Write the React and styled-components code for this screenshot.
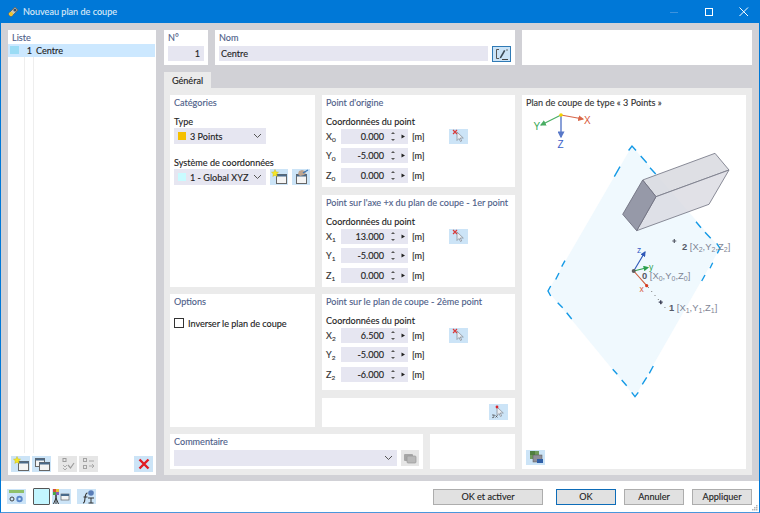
import React from "react";
import styled, { createGlobalStyle } from "styled-components";

const Global = createGlobalStyle`
  html, body { margin: 0; padding: 0; background: #fff; }
  body { font-family: "Lato", "Noto Sans", sans-serif; font-size: 9.1px; color: #222; -webkit-text-stroke: 0.12px currentColor; }
  * { box-sizing: border-box; }
`;

const Win = styled.div`
  width: 760px; height: 513px; display: flex; flex-direction: column;
  border: 1px solid #0078d7; border-top: 0; border-bottom-color: #4a97dc; background: #fff; overflow: hidden;
`;
const TitleBar = styled.div`
  height: 23px; flex: none; background: #0078d7; display: flex; align-items: center;
  padding-left: 6px; color: #dce9f7; font-size: 9.1px; gap: 4px;
`;
const TitleText = styled.span` flex: 1; `;
const WinBtn = styled.div`
  width: 31px; height: 23px; display: flex; align-items: center; justify-content: center; flex: none;
  &:last-child { margin-right: -1px; width: 32px; }
`;
const Main = styled.div`
  height: 458px; flex: none; background: #d1d1d6; display: flex; gap: 8px; padding: 7px 7px 6px;
`;
const Panel = styled.div`
  background: #fff; flex: none;
  width: ${p => p.$w ? p.$w + "px" : "auto"};
  height: ${p => p.$h ? p.$h + "px" : "auto"};
  margin-top: ${p => p.$mt || 0}px;
  padding: ${p => p.$pad || "0 4px"};
`;
const ListPanel = styled(Panel)` display: flex; flex-direction: column; `;
const PanelTitle = styled.div`
  height: 14px; line-height: 16px; color: #4e6089; white-space: nowrap;
`;
const ListHead = styled(PanelTitle)` padding-left: 4px; `;
const ListRow = styled.div`
  height: 13px; line-height: 15px; background: #cce8ff; display: flex; align-items: center; margin-right: 1px; flex: none;
`;
const ListSwatch = styled.span` width: 9px; height: 8px; background: #9bdcf5; margin: -2px 0 0 2px; flex: none; `;
const ListNum = styled.span` width: 13px; text-align: right; flex: none; `;
const ListName = styled.span` margin-left: 4px; `;
const ListBody = styled.div`
  flex: 1; min-height: 0; margin-bottom: 3px;
  background:
    linear-gradient(#eee,#eee) 16px 0/1px 100% no-repeat,
    linear-gradient(#eee,#eee) 25px 0/1px 100% no-repeat;
`;
const Toolbar = styled.div`
  display: flex; height: 19px; padding-left: 3px; gap: 2px; flex: none; align-items: flex-start;
`;
const Spacer = styled.span` width: ${p => p.$w}px; flex: none; `;
const IconBtn = styled.div`
  width: ${p => p.$w || 19}px; height: ${p => p.$h || 16}px; flex: none; display: flex; align-items: center; justify-content: center;
  background: ${p => p.$off ? "#e6e6e6" : "#cce4f7"};
  ${p => p.$active && "outline: 1.5px solid #2f7ab5; outline-offset: -1.5px;"}
`;
const RightCol = styled.div` width: 588px; flex: none; display: flex; flex-direction: column; `;
const HeadRow = styled.div` display: flex; gap: 7px; height: 35px; flex: none; `;
const InlineField = styled.div` display: flex; gap: 4px; align-items: flex-start; margin-top: 2px; `;
const TextBox = styled.div`
  height: 15px; line-height: 15px; background: #e6e6f1; padding: 0 ${p => p.$right ? "4px" : "2px"}; flex: ${p => p.$grow ? 1 : "none"};
  text-align: ${p => p.$right ? "right" : "left"}; width: ${p => p.$w ? p.$w + "px" : "auto"};
`;
const Tab = styled.div`
  margin-top: 7px; width: 47px; height: 16px; background: #ebebeb; line-height: 17px; text-align: center; flex: none;
`;
const TabBody = styled.div` flex: 1; background: #ebebeb; display: flex; gap: 7px; padding: 7px 6px 6px; `;
const LeftBlock = styled.div` width: 345px; display: flex; flex-direction: column; gap: 7px; flex: none; `;
const Columns = styled.div` display: flex; gap: 7px; height: 332px; flex: none; `;
const Col = styled.div` display: flex; flex-direction: column; flex: none; width: ${p => p.$w}px; `;
const FieldLabel = styled.div`
  height: 14px; line-height: 16px; margin-top: ${p => p.$mt || 0}px; white-space: nowrap;
`;
const Select = styled.div`
  height: 16px; width: ${p => p.$w ? p.$w + "px" : "auto"}; background: #e6e6f1; display: flex; align-items: center; padding: 0 4px;
  gap: 4px; flex: ${p => p.$grow ? 1 : "none"};
`;
const Swatch = styled.span` width: 8px; height: 8px; background: ${p => p.$c}; flex: none; `;
const SelectText = styled.span` flex: 1; white-space: nowrap; padding-top: 1px; `;
const SelectRow = styled.div` display: flex; gap: 4px; margin-top: ${p => p.$mt || 0}px; `;
const BtnGroup = styled.div` display: flex; gap: 4px; `;
const CoordRows = styled.div` margin-top: 1px; `;
const CoordRow = styled.div` display: flex; align-items: center; height: 15px; margin-bottom: 4.3px; `;
const AxisLabel = styled.span` width: 15px; flex: none; color: #333; `;
const Sub = styled.sub` font-size: 6.5px; vertical-align: -1.5px; line-height: 0; `;
const CoordBox = styled.div` width: 67px; height: 15px; background: #e6e6f1; display: flex; align-items: center; flex: none; `;
const CoordValue = styled.span` width: 43px; text-align: right; flex: none; `;
const Unit = styled.span` margin-left: 4px; width: 37px; flex: none; `;
const CheckRow = styled.div` display: flex; align-items: center; gap: 4px; margin-top: 9px; height: 12px; letter-spacing: -0.03px; `;
const CheckBox = styled.span` width: 10px; height: 10px; border: 1px solid #333; background: #fff; flex: none; `;
const RightAlign = styled.div` display: flex; justify-content: flex-end; padding: 6px 3px 0 0; `;
const BottomRow = styled.div` display: flex; gap: 7px; height: 35px; flex: none; `;
const DiagramPanel = styled(Panel)` display: flex; flex-direction: column; padding: 0; `;
const DiagramTitle = styled.div` height: 15px; line-height: 16px; padding-left: 4px; color: #333; flex: none; `;
const DiagramSvg = styled.svg` display: block; width: 224px; height: 340px; flex: none; `;
const DiagramFoot = styled.div` padding-left: 4px; flex: none; `;
const Footer = styled.div` flex: 1; display: flex; align-items: flex-start; padding: 7px 7px 0 6px; position: relative; `;
const FooterIcons = styled.div` display: flex; align-items: center; flex: none; width: 426px; `;
const ColorBox = styled.div`
  width: 17px; height: 17px; margin: 0 2px 0 7px; flex: none; background: #c3f6ff; border: 1.5px solid #555; border-radius: 1px;
`;
const FootBtn = styled.div`
  width: ${p => p.$w}px; height: 16px; margin-top: 1px; flex: none; margin-left: ${p => p.$ml || 0}px; text-align: center; line-height: ${p => p.$primary ? "13px" : "14px"};
  background: #e1e1e1; border: ${p => p.$primary ? "1.5px solid #0d6cb8" : "1px solid #adadad"};
`;
const Grip = styled.svg` position: absolute; right: 1px; bottom: 1px; `;

/* ---- small icons ---- */
const Win16 = ({ x = 0, y = 0, w = 10, h = 10 }) => (
  <g>
    <rect x={x + .5} y={y + .5} width={w} height={h} fill="#f4f4f4" stroke="#666" />
    <rect x={x + .5} y={y + .5} width={w} height="2" fill="#4a6a8a" />
  </g>
);
const IconNew = () => (
  <svg width="18" height="16" viewBox="0 0 18 16">
    <Win16 x={6} y={5} w={10} h={9} />
    <path d="M5 0.5l1 2.4 2.5.3-1.8 1.7.5 2.5L5 6.2 2.8 7.4l.5-2.5L1.5 3.2 4 2.9z" fill="#f5e626" stroke="#c8b400" strokeWidth=".4" />
  </svg>
);
const IconCopy = () => (
  <svg width="18" height="16" viewBox="0 0 18 16">
    <Win16 x={2} y={2} w={9} h={8} />
    <Win16 x={6} y={6} w={10} h={8} />
  </svg>
);
const IconEditWin = () => (
  <svg width="18" height="16" viewBox="0 0 18 16">
    <Win16 x={4} y={5} w={10} h={9} />
    <path d="M6 5l1-3 3-1 3 1 1 2-2 2-4 1z" fill="#bda48f" />
    <path d="M11 4l5-3" stroke="#3d78b8" strokeWidth="1.3" />
  </svg>
);
const IconCheck1 = () => (
  <svg width="18" height="16" viewBox="0 0 18 16" fill="none" stroke="#9c9c9c">
    <rect x="4" y="2.5" width="3" height="3" /><path d="M4 9l2 2 2-2M4 12l2 2 2-2" strokeWidth=".8" />
    <path d="M9 9l2.5 3L15 7" strokeWidth="1.2" />
  </svg>
);
const IconCheck2 = () => (
  <svg width="18" height="16" viewBox="0 0 18 16" fill="none" stroke="#a4a4a4">
    <rect x="3.5" y="2.5" width="3" height="3" /><rect x="3.5" y="9.5" width="3" height="3" />
    <path d="M9 5h5M9 10h5l-2-2M14 10l-2 2" strokeWidth=".9" />
  </svg>
);
const IconX = () => (
  <svg width="18" height="16" viewBox="0 0 18 16"><path d="M4.5 3.5l9 9M13.5 3.5l-9 9" stroke="#e01b24" strokeWidth="2.4" /></svg>
);
const IconEdit = () => (
  <svg width="16" height="14" viewBox="0 0 16 14" fill="none">
    <path d="M5 2.5H2.5v9H5" stroke="#555" />
    <path d="M6 10l4-7 1.4 .8-4 7-1.8.7z" fill="#3c4a55" />
    <path d="M8 12.5h6" stroke="#444" /><circle cx="13" cy="3" r=".7" fill="#444" />
  </svg>
);
const IconPick = () => (
  <svg width="19" height="15" viewBox="0 0 19 15">
    <path d="M8 3v8.5l2-2 1.5 3 1.2-.6-1.4-2.9h3z" fill="#e9edf2" stroke="#8a929c" strokeWidth=".8" />
    <path d="M4 1l4 4M8 1L4 5" stroke="#d83a3a" strokeWidth="1.2" />
  </svg>
);
const IconPick3 = () => (
  <svg width="19" height="16" viewBox="0 0 19 16">
    <path d="M8 3v8.5l2-2 1.5 3 1.2-.6-1.4-2.9h3z" fill="#e9edf2" stroke="#8a929c" strokeWidth=".8" />
    <circle cx="8" cy="3" r="1.4" fill="#d8232a" />
    <path d="M3 11h2.5l-1 1.2c1 0 1 1.8-1.4 1.4M6.5 11.5l2 2M8.5 11.5l-2 2" stroke="#444" strokeWidth=".7" fill="none" />
  </svg>
);
const IconComment = () => (
  <svg width="16" height="14" viewBox="0 0 16 14">
    <rect x="2" y="3" width="9" height="7" rx="1" fill="#a6a6a6" />
    <rect x="5" y="5" width="9" height="7" rx="1" fill="#b9b9b9" stroke="#999" strokeWidth=".7" />
  </svg>
);
const IconPic = () => (
  <svg width="18" height="15" viewBox="0 0 18 15">
    <rect x="3" y="1" width="9" height="8" fill="#6f9a5b" />
    <rect x="3" y="1" width="5" height="4" fill="#4f7f3f" />
    <rect x="6" y="5" width="9" height="7" fill="#8f8f9a" stroke="#555" strokeWidth=".5" />
    <rect x="10" y="9" width="6" height="4" fill="#2f5fa8" />
  </svg>
);
const IconUnits = () => (
  <svg width="19" height="15" viewBox="0 0 19 15">
    <rect x="2" y="1" width="15" height="3" fill="#8fc06a" />
    <circle cx="5" cy="10" r="2" fill="none" stroke="#444" strokeWidth="1" />
    <circle cx="12.5" cy="10" r="3.2" fill="#5a86c8" />
    <circle cx="12.5" cy="10" r="1.3" fill="#cce4f7" />
  </svg>
);
const IconTripod = () => (
  <svg width="19" height="16" viewBox="0 0 19 16">
    <rect x="1" y="0" width="3" height="3" fill="#d84a3a" /><rect x="4" y="0" width="3" height="3" fill="#e8c030" />
    <rect x="1" y="3" width="3" height="3" fill="#4aa84a" /><rect x="4" y="3" width="3" height="3" fill="#8a5ab8" />
    <path d="M4 6v3L1.5 15M4 9l2.5 6M4 6v9" stroke="#333" strokeWidth="1" fill="none" />
    <rect x="9" y="5" width="8" height="6" fill="#f4f4f4" stroke="#666" strokeWidth=".7" />
    <rect x="9" y="5" width="8" height="2" fill="#4a6a8a" />
  </svg>
);
const IconFx = () => (
  <svg width="19" height="16" viewBox="0 0 19 16">
    <path d="M6 14c2 0 1.6-2 2-5s.5-5 2.5-5" fill="none" stroke="#333" strokeWidth="1.1" />
    <path d="M6.5 8h4M11 9h6M14 9v5M11.5 14h5" stroke="#333" strokeWidth="1" fill="none" />
    <circle cx="14" cy="4" r="2.8" fill="#5a7db8" />
  </svg>
);
const Chevron = ({ c = "#555" }) => (
  <svg width="9" height="6" viewBox="0 0 9 6"><path d="M1 1l3.5 3.5L8 1" fill="none" stroke={c} strokeWidth="1" /></svg>
);
const Spin = () => (
  <svg width="24" height="15" viewBox="0 0 24 15">
    <path d="M7 5l2-2 2 2zM7 10l2 2 2-2z" fill="#555" />
    <path d="M17.5 5.5l3.5 2-3.5 2z" fill="#222" />
  </svg>
);

const SmallAxis = ({ l, n }) => <AxisLabel>{l}<Sub>{n}</Sub></AxisLabel>;

const CoordPanel = ({ title, h, mt, n, vals }) => (
  <Panel $h={h} $mt={mt}>
    <PanelTitle>{title}</PanelTitle>
    <FieldLabel $mt={5}>Coordonnées du point</FieldLabel>
    <CoordRows>
      {["X", "Y", "Z"].map((a, i) => (
        <CoordRow key={a}>
          <SmallAxis l={a} n={n} />
          <CoordBox><CoordValue>{vals[i]}</CoordValue><Spin /></CoordBox>
          <Unit>[m]</Unit>
          {i === 0 && <IconBtn $h={15}><IconPick /></IconBtn>}
        </CoordRow>
      ))}
    </CoordRows>
  </Panel>
);

const Lbl = ({ x, y, n, i }) => (
  <text x={x} y={y} fontSize="9.4" fill="#7e8494" stroke="none" fontFamily="'Liberation Sans', sans-serif" style={{ WebkitTextStroke: 0 }}>
    <tspan fill="#555a66" fontWeight="700">{n}</tspan>
    {" ["}X<tspan fontSize="7" dy="2">{i}</tspan><tspan dy="-2">,Y</tspan><tspan fontSize="7" dy="2">{i}</tspan><tspan dy="-2">,Z</tspan><tspan fontSize="7" dy="2">{i}</tspan><tspan dy="-2">]</tspan>
  </text>
);

const PLANE_EDGES = [
  "M628.6 150.5L632 146 636 150.5",
  "M614.3 176.7L620 166.7",
  "M565 260.7L561.7 266.7",
  "M559 273L555.7 279.5",
  "M550.7 286L548 291 550.7 296",
  "M557.7 302.7L562.7 307.7",
  "M566.7 312.7L571.7 319",
  "M612.7 369.3L617.3 374.3",
  "M621.7 380L626.7 385.7",
  "M631.7 392.3L635 396.7 638.3 392.3",
  "M642.3 384.3L646.7 377.3",
  "M649.3 373.3L653.3 366",
  "M701.7 281L705 275",
  "M710 268.3L712.7 262.7",
  "M716.7 243.3L720 248.3 717.3 253.3",
  "M640.7 156L646.7 162.7",
  "M650 167.7L655.7 174",
  "M696 221.7L701 227.7",
  "M705 232.3L710.7 238.3",
];

const Diagram = () => (
  <DiagramSvg viewBox="522 110 224 340">
    <defs>
      <marker id="ar" markerWidth="5" markerHeight="5" refX="4" refY="2.5" orient="auto"><path d="M0 0l5 2.5L0 5z" fill="context-stroke" /></marker>
    </defs>
    <path d="M632 146L720 248.3 635 396.7 548 291z" fill="#f0f9fe" />
    <path d={PLANE_EDGES.join("")} fill="none" stroke="#159ae6" strokeWidth="1.4" />
    <path d="M642.7 180L715 153.3 729 170 656 196.7z" fill="#d8d9df" fillOpacity=".85" stroke="#7d7f8c" strokeWidth=".9" />
    <path d="M656 196.7L729 170 709 204.3 636.7 230.7z" fill="#d9dae1" fillOpacity=".8" stroke="#7d7f8c" strokeWidth=".9" />
    <path d="M642.7 180L656 196.7 636.7 230.7 622.7 214.3z" fill="#9699a8" stroke="#6f7180" strokeWidth=".9" />
    <g fontFamily="'Liberation Sans', sans-serif" fontSize="10" style={{ WebkitTextStroke: 0 }}>
      <path d="M561 115L583 119" stroke="#d8674a" strokeWidth="1.2" markerEnd="url(#ar)" />
      <path d="M561 115L541 125" stroke="#48ad62" strokeWidth="1.2" markerEnd="url(#ar)" />
      <path d="M561 115V137" stroke="#5878c8" strokeWidth="1.4" markerEnd="url(#ar)" />
      <circle cx="561" cy="115" r="1.8" fill="#f4d400" />
      <text x="584" y="124" fill="#d8593a">X</text>
      <text x="533.5" y="130" fill="#36a852">Y</text>
      <text x="557.5" y="147.5" fill="#3a5ec8">Z</text>
    </g>
    <g fontFamily="'Liberation Sans', sans-serif" fontSize="8.5" style={{ WebkitTextStroke: 0 }}>
      <path d="M633.7 271L645 252" stroke="#2e58b8" strokeWidth="1.1" markerEnd="url(#ar)" />
      <path d="M633.7 271L648 267.5" stroke="#2ca04c" strokeWidth="1.1" markerEnd="url(#ar)" />
      <path d="M633.7 271L646.7 285.7" stroke="#cf5a38" strokeWidth="1.1" />
      <circle cx="646.7" cy="285.7" r="1.6" fill="#d83a20" />
      <circle cx="633.7" cy="271" r="2" fill="#5f5f5f" />
      <path d="M648 287L667 310" stroke="#777" strokeWidth="1" strokeDasharray="1.2 4" />
      <path d="M660.7 300.2v4M658.7 302.2h4" stroke="#3a3e55" strokeWidth="1.3" />
      <path d="M674.3 239v4M672.3 241h4" stroke="#555a66" strokeWidth="1.2" />
      <text x="637" y="252.5" fill="#3a5ec8">z</text>
      <text x="649" y="269.5" fill="#2ca04c">y</text>
      <text x="639.5" y="292" fill="#d8593a">x</text>
    </g>
    <Lbl x={642} y={279} n="0" i="0" />
    <Lbl x={669} y={311} n="1" i="1" />
    <Lbl x={682} y={250} n="2" i="2" />
  </DiagramSvg>
);

export default function App() {
  return (
    <>
      <Global />
      <Win>
        <TitleBar>
          <svg width="12" height="14" viewBox="0 0 12 14">
            <path d="M1 9l7-7 3 3-7 7z" fill="#c9c4b4" stroke="#5a5a52" strokeWidth=".7" />
            <circle cx="4" cy="9" r="2" fill="#f0c428" /><circle cx="8" cy="5" r="1.6" fill="#3c4f6a" />
          </svg>
          <TitleText>Nouveau plan de coupe</TitleText>
          <WinBtn><svg width="10" height="10"><path d="M1 5.5h8" stroke="#3d93de" /></svg></WinBtn>
          <WinBtn><svg width="10" height="10"><rect x="1.5" y="1.5" width="7" height="7" fill="none" stroke="#fff" /></svg></WinBtn>
          <WinBtn><svg width="10" height="10"><path d="M.5 .5l8.5 8.5M9 .5L.5 9" stroke="#fff" /></svg></WinBtn>
        </TitleBar>
        <Main>
          <ListPanel $w={148} $h={445} $pad="0">
            <ListHead>Liste</ListHead>
            <ListRow><ListSwatch /><ListNum>1</ListNum><ListName>Centre</ListName></ListRow>
            <ListBody />
            <Toolbar>
              <IconBtn><IconNew /></IconBtn>
              <IconBtn><IconCopy /></IconBtn>
              <Spacer $w={3} />
              <IconBtn $off><IconCheck1 /></IconBtn>
              <IconBtn $off><IconCheck2 /></IconBtn>
              <Spacer $w={32} />
              <IconBtn><IconX /></IconBtn>
            </Toolbar>
          </ListPanel>
          <RightCol>
            <HeadRow>
              <Panel $w={44}>
                <PanelTitle>N°</PanelTitle>
                <InlineField><TextBox $right $w={36}>1</TextBox></InlineField>
              </Panel>
              <Panel $w={300}>
                <PanelTitle>Nom</PanelTitle>
                <InlineField><TextBox $grow>Centre</TextBox><IconBtn $active><IconEdit /></IconBtn></InlineField>
              </Panel>
              <Panel $w={230} />
            </HeadRow>
            <Tab>Général</Tab>
            <TabBody>
              <LeftBlock>
                <Columns>
                  <Col $w={145}>
                    <Panel $h={192}>
                      <PanelTitle>Catégories</PanelTitle>
                      <FieldLabel $mt={5}>Type</FieldLabel>
                      <Select $w={92}><Swatch $c="#f5c000" /><SelectText>3 Points</SelectText><Chevron /></Select>
                      <FieldLabel $mt={11}>Système de coordonnées</FieldLabel>
                      <SelectRow>
                        <Select $w={92}><Swatch $c="#c8fbff" /><SelectText>1 - Global XYZ</SelectText><Chevron /></Select>
                        <BtnGroup>
                          <IconBtn $w={18}><IconNew /></IconBtn>
                          <IconBtn $w={18}><IconEditWin /></IconBtn>
                        </BtnGroup>
                      </SelectRow>
                    </Panel>
                    <Panel $h={133} $mt={7}>
                      <PanelTitle>Options</PanelTitle>
                      <CheckRow><CheckBox />Inverser le plan de coupe</CheckRow>
                    </Panel>
                  </Col>
                  <Col $w={193}>
                    <CoordPanel title="Point d'origine" h={92} n="0" vals={["0.000", "-5.000", "0.000"]} />
                    <CoordPanel title="Point sur l'axe +x du plan de coupe - 1er point" h={92} mt={8} n="1" vals={["13.000", "-5.000", "0.000"]} />
                    <CoordPanel title="Point sur le plan de coupe - 2ème point" h={96} mt={7} n="2" vals={["6.500", "-5.000", "-6.000"]} />
                    <Panel $h={29} $mt={8}>
                      <RightAlign><IconBtn><IconPick3 /></IconBtn></RightAlign>
                    </Panel>
                  </Col>
                </Columns>
                <BottomRow>
                  <Panel $w={253}>
                    <PanelTitle>Commentaire</PanelTitle>
                    <SelectRow $mt={2}>
                      <Select $grow><SelectText /><Chevron /></Select>
                      <IconBtn $off $w={18}><IconComment /></IconBtn>
                    </SelectRow>
                  </Panel>
                  <Panel $w={85} />
                </BottomRow>
              </LeftBlock>
              <DiagramPanel $w={224} $h={374}>
                <DiagramTitle>Plan de coupe de type « 3 Points »</DiagramTitle>
                <Diagram />
                <DiagramFoot><IconBtn $h={15}><IconPic /></IconBtn></DiagramFoot>
              </DiagramPanel>
            </TabBody>
          </RightCol>
        </Main>
        <Footer>
          <FooterIcons>
            <IconBtn $h={15}><IconUnits /></IconBtn>
            <ColorBox />
            <IconBtn $h={15}><IconTripod /></IconBtn>
            <Spacer $w={6} />
            <IconBtn $h={15}><IconFx /></IconBtn>
          </FooterIcons>
          <FootBtn $w={110}>OK et activer</FootBtn>
          <FootBtn $w={60} $ml={13} $primary>OK</FootBtn>
          <FootBtn $w={60} $ml={8}>Annuler</FootBtn>
          <FootBtn $w={60} $ml={8}>Appliquer</FootBtn>
          <Grip width="6" height="6" viewBox="0 0 6 6">
            <path d="M4 0h1.5v1.5H4zM2 2h1.5v1.5H2zM4 2h1.5v1.5H4zM0 4h1.5v1.5H0zM2 4h1.5v1.5H2zM4 4h1.5v1.5H4z" fill="#b5b5b5" />
          </Grip>
        </Footer>
      </Win>
    </>
  );
}
